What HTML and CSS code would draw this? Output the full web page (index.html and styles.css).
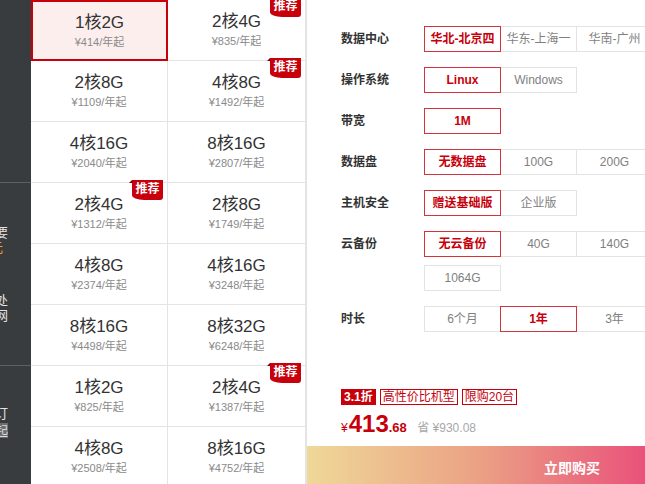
FILE: index.html
```html
<!DOCTYPE html>
<html lang="zh-CN">
<head>
  <meta charset="UTF-8" />
  <meta name="viewport" content="width=device-width, initial-scale=1" />
  <title>云服务器 - 选购</title>
  <link rel="stylesheet" href="styles.css">
</head>
<body>
  <div class="page">
    <!-- Side menu (cut off by the window) -->
    <aside class="side">
      <div class="side-sec"></div>
      <div class="side-sec">
        <div class="side-txt first">要</div>
        <div class="side-txt orange">元</div>
        <div class="side-txt gap">处</div>
        <div class="side-txt">网</div>
      </div>
      <div class="side-sec last">
        <div class="side-txt late">订</div>
        <div class="side-txt boxed">起</div>
      </div>
    </aside>

    <!-- Instance list -->
    <div class="grid">
      <div class="cell selected"><div class="cell-title">1核2G</div><div class="cell-price">¥414/年起</div></div>
      <div class="cell"><span class="badge">推荐</span><div class="cell-title">2核4G</div><div class="cell-price">¥835/年起</div></div>
      <div class="cell"><div class="cell-title">2核8G</div><div class="cell-price">¥1109/年起</div></div>
      <div class="cell"><span class="badge">推荐</span><div class="cell-title">4核8G</div><div class="cell-price">¥1492/年起</div></div>
      <div class="cell"><div class="cell-title">4核16G</div><div class="cell-price">¥2040/年起</div></div>
      <div class="cell"><div class="cell-title">8核16G</div><div class="cell-price">¥2807/年起</div></div>
      <div class="cell"><span class="badge">推荐</span><div class="cell-title">2核4G</div><div class="cell-price">¥1312/年起</div></div>
      <div class="cell"><div class="cell-title">2核8G</div><div class="cell-price">¥1749/年起</div></div>
      <div class="cell"><div class="cell-title">4核8G</div><div class="cell-price">¥2374/年起</div></div>
      <div class="cell"><div class="cell-title">4核16G</div><div class="cell-price">¥3248/年起</div></div>
      <div class="cell"><div class="cell-title">8核16G</div><div class="cell-price">¥4498/年起</div></div>
      <div class="cell"><div class="cell-title">8核32G</div><div class="cell-price">¥6248/年起</div></div>
      <div class="cell"><div class="cell-title">1核2G</div><div class="cell-price">¥825/年起</div></div>
      <div class="cell"><span class="badge">推荐</span><div class="cell-title">2核4G</div><div class="cell-price">¥1387/年起</div></div>
      <div class="cell"><div class="cell-title">4核8G</div><div class="cell-price">¥2508/年起</div></div>
      <div class="cell"><div class="cell-title">8核16G</div><div class="cell-price">¥4752/年起</div></div>
    </div>

    <!-- Configuration panel -->
    <section class="panel">
      <div class="spec-row">
        <span class="spec-label">数据中心</span>
        <div class="opts">
          <span class="opt on">华北-北京四</span>
          <span class="opt">华东-上海一</span>
          <span class="opt">华南-广州</span>
        </div>
      </div>
      <div class="spec-row">
        <span class="spec-label">操作系统</span>
        <div class="opts">
          <span class="opt on">Linux</span>
          <span class="opt">Windows</span>
        </div>
      </div>
      <div class="spec-row">
        <span class="spec-label">带宽</span>
        <div class="opts">
          <span class="opt on">1M</span>
        </div>
      </div>
      <div class="spec-row">
        <span class="spec-label">数据盘</span>
        <div class="opts">
          <span class="opt on">无数据盘</span>
          <span class="opt">100G</span>
          <span class="opt">200G</span>
        </div>
      </div>
      <div class="spec-row">
        <span class="spec-label">主机安全</span>
        <div class="opts">
          <span class="opt on">赠送基础版</span>
          <span class="opt">企业版</span>
        </div>
      </div>
      <div class="spec-row">
        <span class="spec-label">云备份</span>
        <div class="opts">
          <span class="opt on">无云备份</span>
          <span class="opt">40G</span>
          <span class="opt">140G</span>
          <span class="opt">1064G</span>
        </div>
      </div>
      <div class="spec-row">
        <span class="spec-label">时长</span>
        <div class="opts">
          <span class="opt">6个月</span>
          <span class="opt on">1年</span>
          <span class="opt">3年</span>
        </div>
      </div>

      <div class="price-box">
        <div class="tags">
          <span class="tag solid">3.1折</span>
          <span class="tag">高性价比机型</span>
          <span class="tag">限购20台</span>
        </div>
        <div class="price">
          <span class="yen">¥</span><span class="num">413</span><span class="dec">.68</span>
          <span class="save">省 ¥930.08</span>
        </div>
      </div>

      <div class="buy-bar"><span>立即购买</span></div>
    </section>
  </div>
</body>
</html>
```

FILE: styles.css
```css
/* Basic reset */
* {
  box-sizing: border-box;
  margin: 0;
  padding: 0;
}

html, body {
  height: 100%;
  overflow: hidden;
}

body {
  font-family: "Liberation Sans", "Noto Sans CJK SC", sans-serif;
  color: #333;
  background: #fff;
}

.page {
  display: flex;
  height: 484px;
}

/* Side menu */
.side {
  flex: none;
  width: 31px;
  background: #393c3f;
  overflow: hidden;
  display: flex;
  flex-direction: column;
}

.side-sec {
  height: 183px;
  border-bottom: 1px solid #5d6063;
}

.side-sec.last {
  flex: 1;
  border-bottom: none;
}

.side-txt {
  font-size: 13px;
  line-height: 15px;
  color: #e2e2e2;
  margin-left: -5px;
  white-space: nowrap;
}

.side-txt.first { margin-top: 42px; }
.side-txt.orange { color: #f0a02a; margin-left: -10px; }
.side-txt.gap { margin-top: 38px; }
.side-txt.late { margin-top: 40px; }

.side-txt.boxed {
  width: 13px;
  margin-top: 2px;
  background: #6b6e71;
  color: #d8d8d8;
}

/* Instance grid */
.grid {
  flex: none;
  display: grid;
  grid-template-columns: 137px 138px;
  grid-auto-rows: 61px;
  align-content: start;
}

.cell {
  position: relative;
  text-align: center;
  padding-top: 11px;
  border-right: 1px solid #e4e4e4;
  border-bottom: 1px solid #e4e4e4;
}

.cell.selected {
  background: #fdeeee;
  border: 2px solid #c7000b;
  padding-top: 10px;
}

.cell-title {
  font-size: 17px;
  line-height: 22px;
  color: #333;
}

.cell-price {
  font-size: 11px;
  line-height: 16px;
  color: #8a8a8a;
}

.badge {
  position: absolute;
  top: -3px;
  right: 4px;
  width: 31px;
  height: 20px;
  background: #c7000b;
  color: #fff;
  font-size: 12px;
  font-weight: bold;
  line-height: 18px;
  border-radius: 0 0 3px 12px / 0 0 3px 5px;
}

.badge::before {
  content: "";
  position: absolute;
  left: -3px;
  top: 0;
  border-bottom: 3px solid #7a0007;
  border-left: 3px solid transparent;
}

/* Configuration panel */
.panel {
  flex: 1;
  min-width: 0;
  display: flex;
  flex-direction: column;
  padding-top: 26px;
  border-left: 1px solid #e4e4e4;
}

.spec-row {
  display: flex;
  align-items: flex-start;
  padding-left: 34px;
  margin-bottom: 15px;
}

.spec-label {
  flex: none;
  width: 83px;
  font-size: 12px;
  line-height: 26px;
  font-weight: bold;
  color: #333;
}

.opts {
  flex: none;
  width: 231px;
  display: flex;
  flex-wrap: wrap;
  row-gap: 8px;
}

.opt {
  position: relative;
  width: 77px;
  height: 26px;
  margin-right: -1px;
  border: 1px solid #e3e3e3;
  font-size: 12px;
  line-height: 24px;
  text-align: center;
  color: #7f7f7f;
  white-space: nowrap;
}

.opt.on {
  z-index: 1;
  border-color: #d2343e;
  color: #c7000b;
  font-weight: bold;
}

/* Price */
.price-box {
  padding-left: 34px;
  margin-top: 42px;
}

.tags {
  display: flex;
  gap: 4px;
}

.tag {
  height: 16px;
  padding: 0 2px;
  border: 1px solid #c7000b;
  font-size: 12px;
  line-height: 14px;
  color: #c7000b;
}

.tag.solid {
  background: #c7000b;
  color: #fff;
  font-weight: bold;
}

.price {
  margin-top: 5px;
  line-height: 28px;
  color: #c7000b;
  white-space: nowrap;
}

.price .yen {
  font-size: 12px;
}

.price .num {
  font-size: 24px;
  font-weight: bold;
  margin-left: 1px;
}

.price .dec {
  font-size: 13px;
  font-weight: bold;
}

.price .save {
  margin-left: 6px;
  font-size: 12px;
  color: #a8a8a8;
}

/* Buy button */
.buy-bar {
  margin-top: auto;
  height: 38px;
  display: flex;
  align-items: center;
  justify-content: flex-end;
  padding: 4px 45px 0 0;
  background: linear-gradient(90deg, #efd898, #eba285 50%, #e9527a);
  color: #fff;
  font-size: 14px;
  font-weight: bold;
}
```
